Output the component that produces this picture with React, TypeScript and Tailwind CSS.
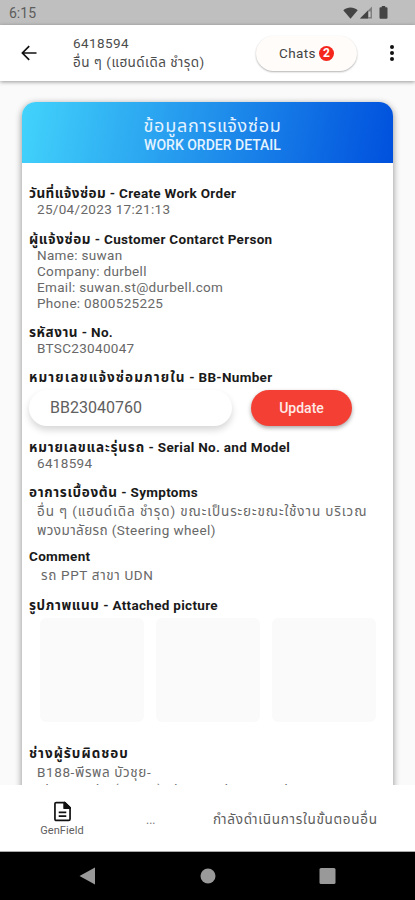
import React, { useState } from 'react';

type HeadingProps = {
  thai?: string;
  thaiClass?: string;
  latin?: string;
  className?: string;
};

const Heading = ({ thai, thaiClass = '', latin, className = '' }: HeadingProps) => (
  <h3 className={`w-fit whitespace-pre text-[13.5px] font-bold leading-4 tracking-[0.3px] text-[#1a1a1a] ${className}`}>
    {thai && <span className={thaiClass}>{thai}</span>}
    {latin && <span>{latin}</span>}
  </h3>
);

type LinesProps = {
  lines: { text: string; className: string }[];
};

const Lines = ({ lines }: LinesProps) => (
  <div className="flex flex-col items-start pl-2">
    {lines.map((line) => (
      <span
        key={line.text}
        className={`whitespace-nowrap text-[13.5px] leading-4 text-[#686868] ${line.className}`}
      >
        {line.text}
      </span>
    ))}
  </div>
);

const StatusBar = () => (
  <div className="flex h-[25px] shrink-0 items-center bg-[#bfbfbf] pl-[9px] pr-[27px] text-[#444]">
    <span className="flex-1 text-[14px] leading-4 text-[#5c5c5c]">6:15</span>
    <svg width="15" height="12" viewBox="0 0 15 12" fill="currentColor">
      <path d="M7.5 11.8 0.3 3.2C4.5-.4 10.5-.4 14.7 3.2Z" />
    </svg>
    <svg className="ml-[2px]" width="12" height="13" viewBox="0 0 12 13">
      <path d="M0 12.5 12 0.5V12.5Z" fill="#7f7f7f" />
      <path d="M0 12.5 8 4.5V12.5Z" fill="#444" />
      <path d="M8.5 5.5h2v5.5h-2z" fill="#c9c9c9" />
    </svg>
    <svg className="ml-[7px]" width="9" height="13" viewBox="0 0 9 13" fill="currentColor">
      <path d="M2.8 0h3.4v1.3h1.3q1 0 1 1v9.4q0 1-1 1h-6q-1 0-1-1V2.3q0-1 1-1h1.3z" />
    </svg>
  </div>
);

const Header = () => (
  <header className="z-10 flex h-[56px] shrink-0 items-center bg-white px-[21px] shadow-[0_1px_4px_rgba(0,0,0,0.4)]">
    <button aria-label="Back">
      <svg width="16" height="16" viewBox="0 0 16 16" fill="none" stroke="#111" strokeWidth="1.7">
        <path d="M15.5 8H1.5M8.2 1.2 1.4 8l6.8 6.8" />
      </svg>
    </button>
    <div className="ml-9 flex flex-1 flex-col items-start whitespace-nowrap text-[13.5px] leading-[19px] text-[#4c4c4c]">
      <span className="tracking-[0.4px]">6418594</span>
      <span className="tracking-[0.5px]">อื่น ๆ (แฮนด์เดิล ชำรุด)</span>
    </div>
    <button className="mr-[33px] flex h-[35px] w-[101px] items-center justify-center rounded-full bg-[#fffcfa] text-[13.5px] tracking-[0.4px] text-[#444] shadow-[0_1px_2px_rgba(0,0,0,0.3)]">
      Chats
      <span className="ml-[3px] flex h-[15px] w-[15px] items-center justify-center rounded-full bg-[#f5261c] text-[12px] font-bold tracking-normal text-white">
        2
      </span>
    </button>
    <button aria-label="Menu" className="flex w-1 flex-col gap-[2px]">
      <i className="h-1 w-1 rounded-full bg-[#111]" />
      <i className="h-1 w-1 rounded-full bg-[#111]" />
      <i className="h-1 w-1 rounded-full bg-[#111]" />
    </button>
  </header>
);

const App = () => {
  const [bbNumber, setBbNumber] = useState('BB23040760');

  return (
    <div className="flex h-[900px] w-[415px] flex-col overflow-hidden bg-[#fafafa] font-['Roboto','Noto_Sans_Thai','Noto_Sans',sans-serif]">
      <StatusBar />
      <Header />

      {/* Work order card */}
      <main className="min-h-0 flex-1 overflow-hidden px-[22px] pt-[21px]">
        <div className="h-[760px] rounded-t-[14px] bg-white shadow-[0_2px_7px_rgba(0,0,0,0.45)]">
          <div className="flex h-[61px] flex-col items-center whitespace-nowrap rounded-t-[14px] bg-linear-[100deg,#42d3fb,#0050dd] pl-[10px] pt-[14px] text-[#e4f3ff]">
            <h1 className="text-[18px] leading-[20px] tracking-[0.7px]">ข้อมูลการแจ้งซ่อม</h1>
            <h2 className="text-[14px] font-medium leading-[19px]">WORK ORDER DETAIL</h2>
          </div>

          <div className="flex flex-col pl-[7px] pt-[22px]">
            <Heading thai="วันที่แจ้งซ่อม" thaiClass="tracking-[0.45px]" latin=" - Create Work Order" />
            <Lines lines={[{ text: '25/04/2023 17:21:13', className: 'tracking-[0.32px]' }]} />

            <Heading thai="ผู้แจ้งซ่อม" thaiClass="tracking-[0.6px]" latin=" - Customer Contarct Person" className="mt-[14px]" />
            <Lines
              lines={[
                { text: 'Name: suwan', className: 'tracking-[0.32px]' },
                { text: 'Company: durbell', className: 'tracking-[0.32px]' },
                { text: 'Email: suwan.st@durbell.com', className: 'tracking-[0.32px]' },
                { text: 'Phone: 0800525225', className: 'tracking-[0.32px]' },
              ]}
            />

            <Heading thai="รหัสงาน" thaiClass="tracking-[0.55px]" latin=" - No." className="mt-[13px]" />
            <Lines lines={[{ text: 'BTSC23040047', className: 'tracking-[0.32px]' }]} />

            <Heading thai="หมายเลขแจ้งซ่อมภายใน" thaiClass="tracking-[1.1px]" latin=" - BB-Number" className="mt-[13px]" />
            <div className="mt-[5px] flex h-9 items-center">
              <input
                value={bbNumber}
                onChange={(e) => setBbNumber(e.target.value)}
                className="h-9 w-[203px] rounded-full bg-white pb-px pl-[21px] text-[16px] text-[#606060] shadow-[0_4px_7px_rgba(0,0,0,0.16)] outline-none"
              />
              <button className="ml-[19px] h-9 w-[101px] rounded-full bg-[#f44034] text-[14px] font-medium text-[#ffe9e6] shadow-[0_2px_4px_rgba(0,0,0,0.35)]">
                Update
              </button>
            </div>

            <Heading thai="หมายเลขและรุ่นรถ" thaiClass="tracking-[0.8px]" latin=" - Serial No. and Model" className="mt-[13px]" />
            <Lines lines={[{ text: '6418594', className: 'tracking-[0.32px]' }]} />

            <Heading thai="อาการเบื้องต้น" thaiClass="tracking-[0.65px]" latin=" - Symptoms" className="mt-[13px]" />
            <Lines
              lines={[
                { text: 'อื่น ๆ (แฮนด์เดิล ชำรุด) ขณะเป็นระยะขณะใช้งาน บริเวณ', className: 'mt-[3px] tracking-[0.9px]' },
                { text: 'พวงมาลัยรถ (Steering wheel)', className: 'mt-[3px] tracking-[0.4px]' },
              ]}
            />

            <Heading latin="Comment" className="mt-[10px]" />
            <Lines lines={[{ text: 'รถ PPT สาขา UDN', className: 'ml-1 mt-[3px] tracking-[0.65px]' }]} />

            <Heading thai="รูปภาพแนบ" thaiClass="tracking-[0.6px]" latin=" - Attached picture" className="mt-[14px]" />
            <div className="ml-[11px] mt-[5px] flex gap-3">
              <div className="h-[104px] w-[104px] rounded-md bg-[#fafafa]" />
              <div className="h-[104px] w-[104px] rounded-md bg-[#fafafa]" />
              <div className="h-[104px] w-[104px] rounded-md bg-[#fafafa]" />
            </div>

            <Heading thai="ช่างผู้รับผิดชอบ" thaiClass="tracking-[1px]" className="mt-[23px]" />
            <Lines
              lines={[
                { text: 'B188-พีรพล บัวชุย-', className: 'mt-[3px] tracking-[0.6px]' },
                { text: 'Phromruchai(TruePi)-Phromruchai Bitruichai', className: 'mt-px' },
              ]}
            />
          </div>
        </div>
      </main>

      {/* Bottom bar */}
      <footer className="z-10 flex h-[67px] shrink-0 items-center border-b border-[#aaa] bg-white pt-[3px]">
        <button className="ml-[40px] flex w-11 flex-col items-center">
          <svg width="17" height="21" viewBox="0 0 18 21" fill="none" stroke="#111" strokeWidth="1.8" strokeLinejoin="round">
            <path d="M2.5 1h9L17 6.5V18.5q0 1.5-1.500 1.5h-13Q1 20 1 18.5v-16Q1 1 2.500 1Z" />
            <path d="M11 1v6h6zM5 11.500h8M5 15.500h8" />
            <path d="M11 1v6h6z" fill="#111" />
          </svg>
          <span className="mt-[2px] whitespace-nowrap text-[11px] leading-[14px] tracking-[0.1px] text-[#606060]">GenField</span>
        </button>
        <span className="ml-[62px] w-3 text-[12px] text-[#777]">...</span>
        <span className="ml-[55px] whitespace-nowrap text-[13.5px] tracking-[0.7px] text-[#5c5c5c]">กำลังดำเนินการในขั้นตอนอื่น</span>
      </footer>

      {/* Android navigation */}
      <nav className="flex h-12 shrink-0 items-center bg-black">
        <svg width="415" height="48" viewBox="0 0 415 48" fill="#999">
          <path d="M79.5 24 95 15.5v17z" />
          <circle cx="208" cy="24" r="7.5" />
          <rect x="319.5" y="16" width="16" height="16" rx="1.5" />
        </svg>
      </nav>
    </div>
  );
};

export default App;
